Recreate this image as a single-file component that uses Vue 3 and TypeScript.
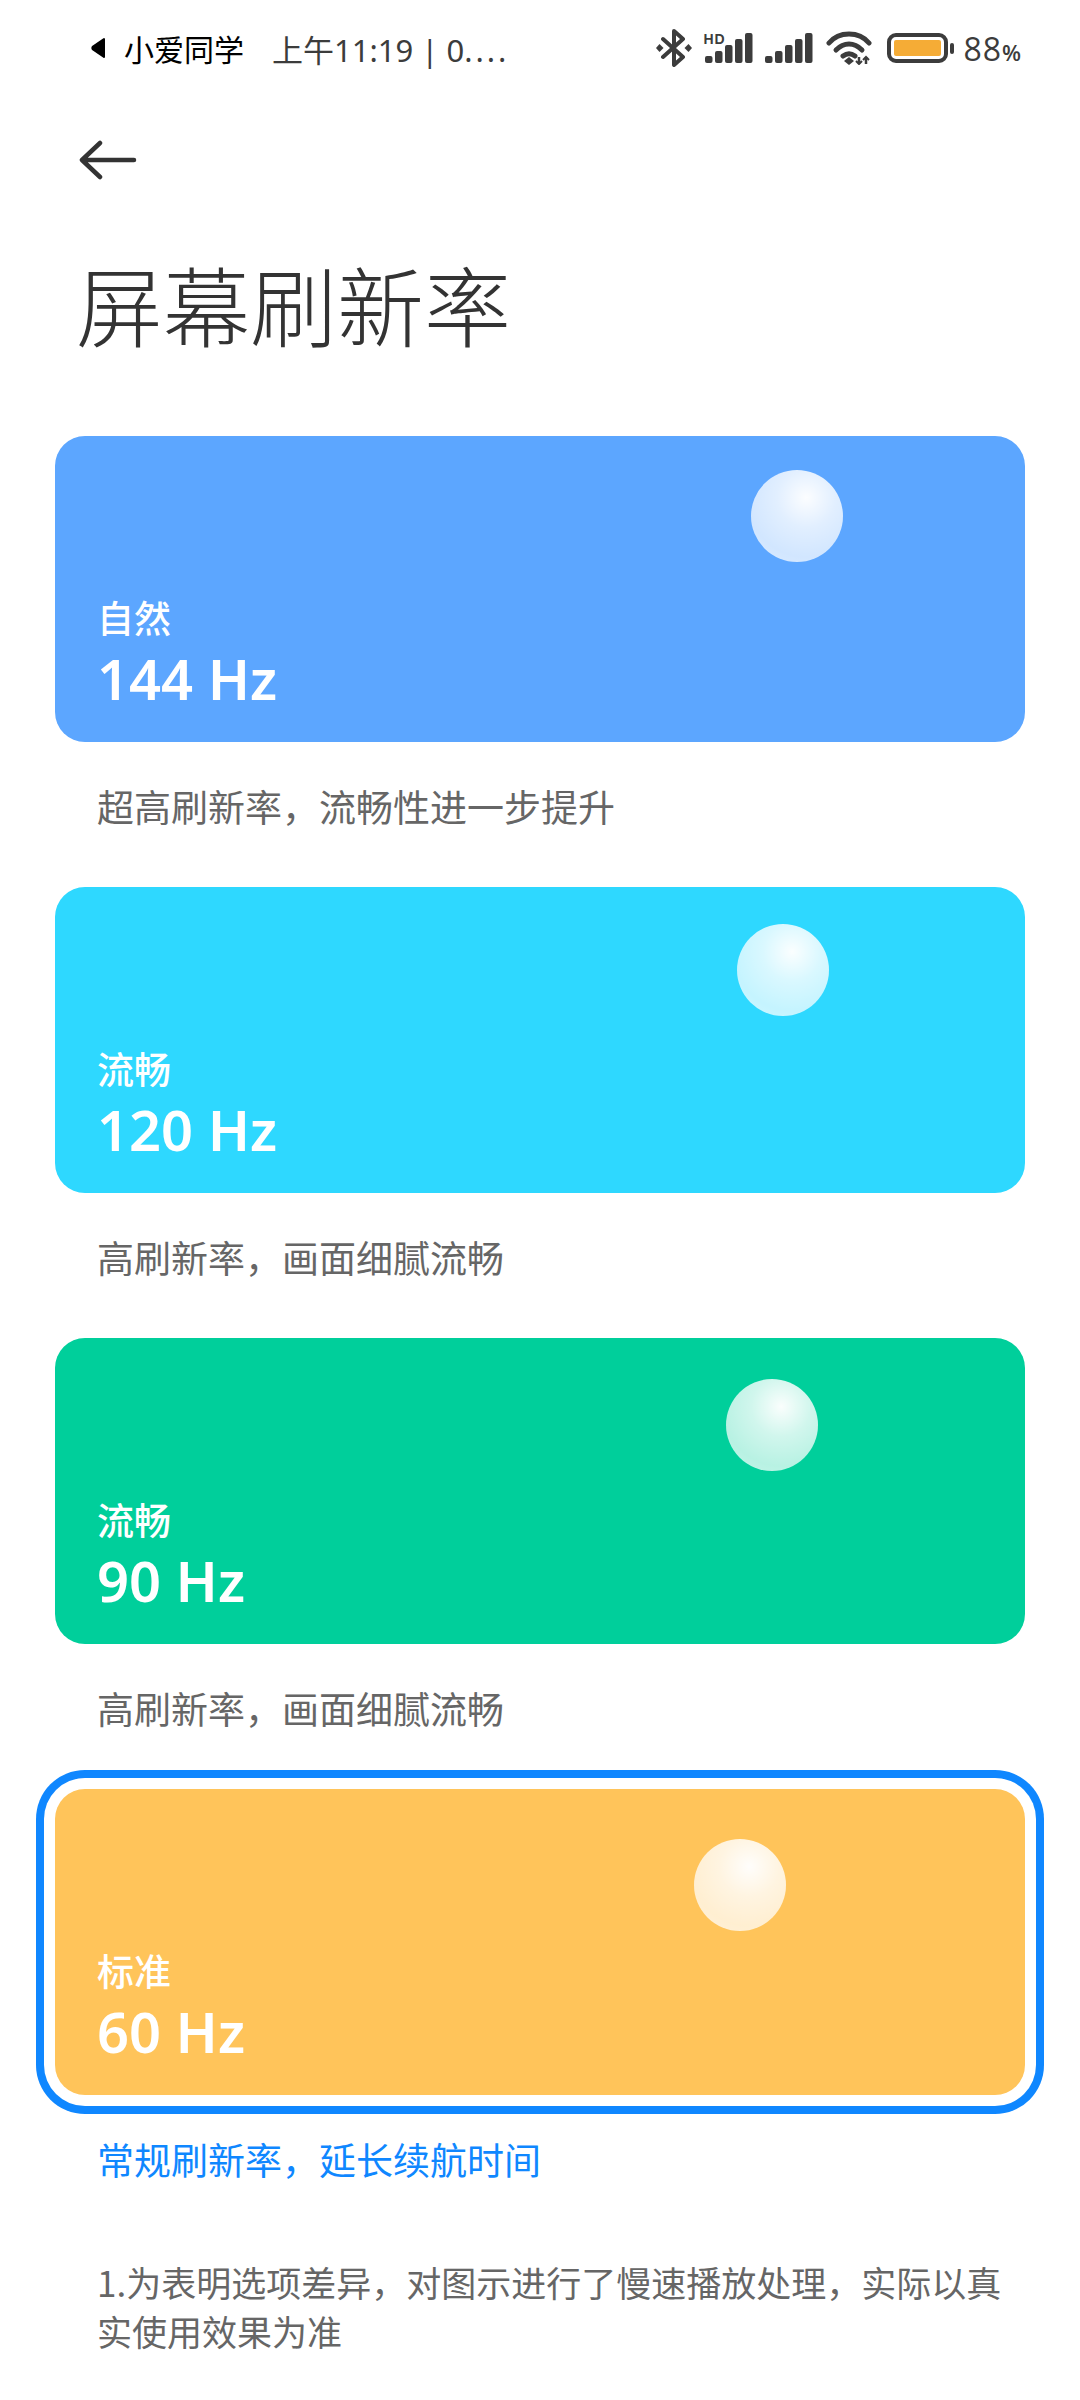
<template>
  <div class="page">
    <div class="status-bar">
      <div class="status-left">
        <svg class="back-tri" width="16" height="24" viewBox="0 0 16 24">
          <path d="M14 3v18L3 13.5a2 2 0 0 1 0-3z" fill="#000" stroke="#000" stroke-width="2" stroke-linejoin="round" />
        </svg>
        <span class="assistant">小爱同学</span>
        <span class="clock">上午11:19 | 0<span class="dots">....</span></span>
      </div>
      <div class="status-right">
        <svg width="36" height="38" viewBox="0 0 36 38" fill="none">
          <path d="M7 10l20 18-9 8V2l9 8L7 28" stroke="#3c3c3c" stroke-width="4" stroke-linejoin="round" stroke-linecap="round" />
          <path d="M3.5 15l4 4-4 4-3.500-4zM32.500 15l3.500 4-3.500 4-4-4z" fill="#3c3c3c" />
        </svg>
        <div class="signal-wrap">
          <span class="hd">HD</span>
          <svg class="bars" width="48" height="30" viewBox="0 0 48 30" fill="#3c3c3c">
            <rect v-for="bar in bars" :key="bar.x" :x="bar.x" :y="bar.y" width="7.500" :height="30 - bar.y" rx="2" />
          </svg>
        </div>
        <svg class="signal2 bars" width="48" height="30" viewBox="0 0 48 30" fill="#3c3c3c">
          <rect v-for="bar in bars" :key="bar.x" :x="bar.x" :y="bar.y" width="7.500" :height="30 - bar.y" rx="2" />
        </svg>
        <svg class="wifi" width="46" height="34" viewBox="0 0 46 34" fill="none" stroke="#3c3c3c" stroke-width="5" stroke-linecap="round">
          <path d="M3 12C13 0 33 0 43 12" />
          <path d="M10 19c8-8 18-8 26 0" />
          <path d="M17 25c4-3 8-3 12 0" />
          <path d="M23 26l5 4-5 4-5-4z" fill="#3c3c3c" stroke="none" />
          <path d="M33 33v-7M40 33v-7" stroke-width="2.500" stroke-linecap="butt" />
          <path d="M30 30l3 3 3-3M37 29l3-3 3 3" stroke-width="2" stroke-linecap="butt" />
        </svg>
        <div class="battery">
          <div class="battery-body"><div class="battery-fill"></div></div>
          <div class="battery-cap"></div>
        </div>
        <span class="percent">88<small>%</small></span>
      </div>
    </div>

    <svg class="back" width="58" height="40" viewBox="0 0 58 40" fill="none" stroke="#333" stroke-width="4.500" stroke-linecap="round" stroke-linejoin="round">
      <path d="M55 20H3M21 3L3 20l18 17" />
    </svg>

    <h1 class="title">屏幕刷新率</h1>

    <div class="list">
      <div v-for="item in rates" :key="item.hz" class="option" :class="{ selected: item.selected }">
        <div class="card" :style="{ background: item.color }">
          <div class="ball" :style="{ left: item.ballX + 'px', top: item.ballY + 'px' }"></div>
          <div class="name">{{ item.name }}</div>
          <div class="hz">{{ item.hz }} Hz</div>
        </div>
        <p class="caption">{{ item.desc }}</p>
      </div>
    </div>

    <p class="note">1.为表明选项差异，对图示进行了慢速播放处理，实际以真实使用效果为准</p>
  </div>
</template>

<script setup lang="ts">
interface Rate {
  name: string
  hz: number
  desc: string
  color: string
  ballX: number
  ballY: number
  selected?: boolean
}

const bars = [
  { x: 0, y: 23 },
  { x: 10, y: 18 },
  { x: 20, y: 12 },
  { x: 30, y: 6 },
  { x: 40, y: 0 }
]

const rates: Rate[] = [
  { name: '自然', hz: 144, desc: '超高刷新率，流畅性进一步提升', color: '#5ca6ff', ballX: 696, ballY: 34 },
  { name: '流畅', hz: 120, desc: '高刷新率，画面细腻流畅', color: '#2ed8ff', ballX: 682, ballY: 37 },
  { name: '流畅', hz: 90, desc: '高刷新率，画面细腻流畅', color: '#00cf9b', ballX: 671, ballY: 41 },
  { name: '标准', hz: 60, desc: '常规刷新率，延长续航时间', color: '#ffc45a', ballX: 639, ballY: 50, selected: true }
]
</script>

<style>
html,
body {
  background: #fff;
}
</style>

<style scoped>
.page {
  width: 1080px;
  height: 2400px;
  overflow: hidden;
  background: #fff;
  font-family: "Noto Sans CJK SC", "Noto Sans", sans-serif;
}

.status-bar {
  height: 96px;
  padding: 0 58px 0 90px;
  display: flex;
  align-items: center;
  justify-content: space-between;
  box-sizing: border-box;
}

.status-left {
  display: flex;
  align-items: center;
  font-size: 30px;
  white-space: nowrap;
}

.back-tri {
  margin-right: 18px;
}

.assistant {
  color: #000;
}

.clock {
  margin-left: 28px;
  color: #3c3c3c;
  font-family: "Noto Sans", "Noto Sans CJK SC", sans-serif;
  font-size: 31px;
}

.dots {
  letter-spacing: 3px;
}

.status-right {
  display: flex;
  align-items: center;
}

.signal-wrap {
  position: relative;
  margin-left: 13px;
  height: 30px;
}

.hd {
  position: absolute;
  left: -2px;
  top: -1px;
  font: 700 14px/14px "Liberation Sans", sans-serif;
  letter-spacing: 1px;
  color: #3c3c3c;
}

.bars {
  display: block;
}

.signal2 {
  margin-left: 12px;
}

.wifi {
  margin-left: 13px;
}

.battery {
  display: flex;
  align-items: center;
  margin-left: 15px;
}

.battery-body {
  width: 61px;
  height: 30px;
  padding: 3px;
  box-sizing: border-box;
  border: 4px solid #3c3c3c;
  border-radius: 9px;
}

.battery-fill {
  height: 100%;
  background: #f5ac36;
  border-radius: 2px;
}

.battery-cap {
  width: 4px;
  height: 11px;
  margin-left: 2px;
  background: #3c3c3c;
  border-radius: 2px;
}

.percent {
  margin-left: 9px;
  font: 400 32px "Open Sans", sans-serif;
  letter-spacing: 1px;
  color: #3c3c3c;
}

.percent small {
  font-size: 22px;
  font-weight: 600;
}

.back {
  display: block;
  margin: 44px 0 0 79px;
}

.title {
  margin: 73px 0 0 76px;
  font-size: 87px;
  line-height: 100px;
  font-weight: 300;
  color: #333;
}

.list {
  margin: 83px 55px 0;
  display: flex;
  flex-direction: column;
}

.option {
  height: 451px;
}

.card {
  position: relative;
  height: 306px;
  padding: 156px 42px 0;
  box-sizing: border-box;
  border-radius: 30px;
  color: #fff;
}

.selected .card {
  box-shadow: 0 0 0 11px #fff, 0 0 0 19px #0f87ff;
}

.ball {
  position: absolute;
  width: 92px;
  height: 92px;
  border-radius: 50%;
  background: radial-gradient(circle at 60% 30%, rgba(255, 255, 255, 0.98) 0, rgba(255, 255, 255, 0.82) 35%, rgba(255, 255, 255, 0.72) 70%, rgba(255, 255, 255, 0.8) 100%);
}

.name {
  font-size: 37px;
  line-height: 50px;
  font-weight: 500;
}

.hz {
  font: 600 56px/72px "Noto Sans", sans-serif;
}

.caption {
  margin: 39px 0 0 42px;
  font-size: 37px;
  line-height: 50px;
  color: #666;
}

.selected .caption {
  color: #0f87ff;
}

.note {
  width: 925px;
  margin: 17px 0 0 97px;
  font-size: 35px;
  line-height: 49px;
  color: #666;
}
</style>
